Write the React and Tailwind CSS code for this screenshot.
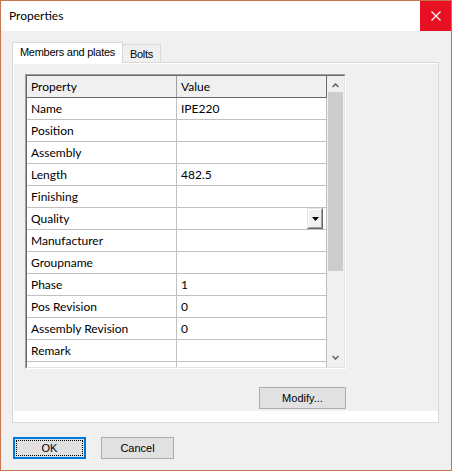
import React from "react";

const rows = [
  ["Name", "IPE220"],
  ["Position", ""],
  ["Assembly", ""],
  ["Length", "482.5"],
  ["Finishing", ""],
  ["Quality", "", true],
  ["Manufacturer", ""],
  ["Groupname", ""],
  ["Phase", "1"],
  ["Pos Revision", "0"],
  ["Assembly Revision", "0"],
  ["Remark", ""],
  ["Pos Profile", "55"],
];

function Chevron({ down }) {
  return (
    <svg width="7" height="5" viewBox="0 0 7 5" className="block">
      {down ? (
        <path d="M0.5 1 L3.5 4 L6.5 1" fill="none" stroke="#606060" strokeWidth="1.5" />
      ) : (
        <path d="M0.5 4 L3.5 1 L6.5 4" fill="none" stroke="#606060" strokeWidth="1.5" />
      )}
    </svg>
  );
}

function DropButton() {
  return (
    <div className="w-[16px] h-[21px] mr-[3px] border border-t-[#e3e3e3] border-l-[#e3e3e3] border-r-[#696969] border-b-[#696969] flex">
      <div className="flex-1 border border-t-white border-l-white border-r-[#a0a0a0] border-b-[#a0a0a0] bg-[#f0f0f0] flex items-center justify-center">
        <svg width="7" height="4" viewBox="0 0 7 4" className="block">
          <path d="M0 0 H7 L3.5 4 Z" fill="#000" />
        </svg>
      </div>
    </div>
  );
}

export default function App() {
  return (
    <div className="w-[452px] h-[471px] border border-[#c5764f] bg-[#f0f0f0] flex flex-col overflow-hidden text-black">
      {/* Title bar */}
      <div className="h-[30px] bg-white flex shrink-0">
        <div className="flex-1 pl-[8px] flex items-center text-[12px] font-['Lato',sans-serif]">Properties</div>
        <div className="w-[31px] bg-[#e81123] flex items-center justify-center">
          <svg width="10" height="10" viewBox="0 0 10 10" className="block">
            <path d="M0.5 0.5 L9.5 9.5 M9.5 0.5 L0.5 9.5" stroke="#fff" strokeWidth="1.2" fill="none" />
          </svg>
        </div>
      </div>

      {/* Body */}
      <div className="pl-[11px] pt-[11px] flex flex-col">
        {/* Tabs */}
        <div className="flex items-end h-[20px] font-['Liberation_Sans',Arial,sans-serif] text-[11px] tracking-[-0.25px]">
          <div className="relative z-10 -mb-px h-[21px] w-[111px] bg-white border border-b-0 border-[#d9d9d9] flex justify-center pt-[3px] leading-[13px]">
            Members and plates
          </div>
          <div className="h-[18px] w-[38px] border-t border-r border-[#d9d9d9] flex justify-center pt-[3px] leading-[13px]">
            Bolts
          </div>
        </div>

        {/* Panel */}
        <div className="w-[427px] h-[361px] border border-[#d9d9d9] bg-white flex flex-col">
          <div className="flex-1 mt-px ml-px bg-[#f0f0f0] pl-[11px] pt-[10px] flex flex-col">
            <div className="w-[321px] flex flex-col">
              {/* Grid */}
              <div className="h-[295px] border border-t-[#a0a0a0] border-l-[#a0a0a0] border-r-white border-b-white flex">
                <div className="flex-1 border border-t-[#696969] border-l-[#696969] border-r-[#e3e3e3] border-b-[#e3e3e3] flex overflow-hidden bg-white">
                  <div className="w-[300px] flex flex-col overflow-hidden font-['Lato',sans-serif] text-[12px]">
                    <div className="h-[22px] shrink-0 flex bg-[#f0f0f0] border-b border-[#696969]">
                      <div className="w-[150px] border-r border-[#a0a0a0] pl-[4px] flex items-center">Property</div>
                      <div className="w-[150px] border-r border-[#696969] pl-[4px] flex items-center">Value</div>
                    </div>
                    {rows.map(([k, v, dd]) => (
                      <div key={k} className="h-[22px] shrink-0 flex border-b border-[#c0c0c0]">
                        <div className="w-[150px] border-r border-[#c0c0c0] pl-[4px] flex items-center">{k}</div>
                        <div className="w-[150px] border-r border-[#c0c0c0] pl-[4px] flex items-center justify-between">
                          <span>{v}</span>
                          {dd && <DropButton />}
                        </div>
                      </div>
                    ))}
                  </div>
                  {/* Scrollbar */}
                  <div className="w-[17px] bg-[#f0f0f0] flex flex-col">
                    <div className="h-[16px] flex items-center justify-center pt-[2px]">
                      <Chevron />
                    </div>
                    <div className="h-[179px] mx-px bg-[#cdcdcd]" />
                    <div className="flex-1" />
                    <div className="h-[17px] flex items-center justify-center pb-[2px]">
                      <Chevron down />
                    </div>
                  </div>
                </div>
              </div>

              {/* Modify */}
              <div className="mt-[18px] self-end w-[87px] h-[22px] bg-[#e1e1e1] border border-[#adadad] flex items-center justify-center font-['Liberation_Sans',Arial,sans-serif] text-[11px]">
                Modify...
              </div>
            </div>
          </div>
          <div className="h-[11px] shrink-0" />
        </div>

        {/* Dialog buttons */}
        <div className="mt-[14px] ml-px flex gap-[15px] font-['Liberation_Sans',Arial,sans-serif] text-[11px]">
          <div className="w-[73px] h-[22px] border-2 border-[#0078d7] bg-[#e1e1e1] flex p-px">
            <div className="flex-1 border border-dotted border-black flex items-center justify-center">OK</div>
          </div>
          <div className="w-[73px] h-[22px] border border-[#adadad] bg-[#e1e1e1] flex items-center justify-center">
            Cancel
          </div>
        </div>
      </div>
    </div>
  );
}
